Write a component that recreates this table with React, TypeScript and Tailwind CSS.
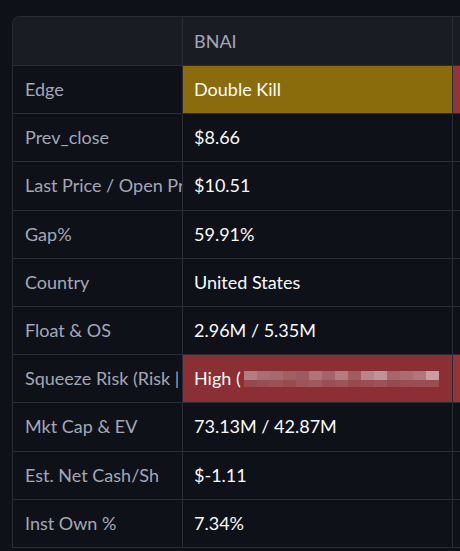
const rows: { label: string; value: string; tone?: 'gold' | 'red'; next?: 'red' }[] = [
  { label: 'Edge', value: 'Double Kill', tone: 'gold', next: 'red' },
  { label: 'Prev_close', value: '$8.66' },
  { label: 'Last Price / Open Price', value: '$10.51' },
  { label: 'Gap%', value: '59.91%' },
  { label: 'Country', value: 'United States' },
  { label: 'Float & OS', value: '2.96M / 5.35M' },
  { label: 'Squeeze Risk (Risk | Reason)', value: 'High (', tone: 'red', next: 'red' },
  { label: 'Mkt Cap & EV', value: '73.13M / 42.87M' },
  { label: 'Est. Net Cash/Sh', value: '$-1.11' },
  { label: 'Inst Own %', value: '7.34%' },
];

// pixelated blur over the redacted reason text
const mosaicTop = ['#b47d80', '#a96e72', '#a56a6d', '#a0605f', '#9e5b5f', '#b07477', '#a46467', '#b27c80', '#a25c60', '#b6868a', '#be9498', '#a6666a', '#aa6e72', '#b0777b', '#c89ea0'];
const mosaicBottom = ['#98484d', '#9a4d52', '#9c5156', '#9a4b50', '#9e555a', '#a05a5f', '#9b4f54', '#9d5358', '#984a4f', '#9a4d52', '#9c5257', '#974a4f', '#9a4c51', '#9b4e53', '#9a4d52'];

function Mosaic() {
  return (
    <div className="ml-[3px] flex flex-col">
      <div className="flex">
        {mosaicTop.map((c, i) => (
          <div key={i} className="h-[9px] w-[13px]" style={{ backgroundColor: c }} />
        ))}
      </div>
      <div className="flex">
        {mosaicBottom.map((c, i) => (
          <div key={i} className="h-[7px] w-[13px]" style={{ backgroundColor: c }} />
        ))}
      </div>
    </div>
  );
}

export default function App() {
  return (
    <div
      className="h-[551px] w-[460px] overflow-hidden bg-[#0e1117] pl-3 pt-4"
      style={{ fontFamily: 'Lato, "Liberation Sans", sans-serif' }}
    >
      <div className="w-[700px] overflow-hidden rounded-tl-lg border-l border-t border-[#2b2d35] text-[18px]">
        {/* header */}
        <div className="flex h-[49px] bg-[#1a1c23]">
          <div className="w-[170px] shrink-0 border-b border-r border-[#2b2d35]" />
          <div className="flex w-[270px] shrink-0 items-center border-b border-r border-[#2b2d35] px-[11px] text-[#a3a8b8]">
            BNAI
          </div>
          <div className="w-[200px] shrink-0 border-b border-[#2b2d35]" />
        </div>
        {rows.map((r) => (
          <div key={r.label} className="flex h-[48.2px]">
            <div className="flex w-[170px] shrink-0 items-center overflow-hidden whitespace-nowrap border-b border-r border-[#2b2d35] bg-[#0e1117] pl-3 text-[#a3a8b8]">
              {r.label}
            </div>
            <div
              className={
                'flex w-[270px] shrink-0 items-center overflow-hidden whitespace-nowrap border-b border-r border-[#2b2d35] px-[11px] text-[#fafafa] ' +
                (r.tone === 'gold' ? 'bg-[#8a6c0c]' : r.tone === 'red' ? 'bg-[#8b2f34]' : 'bg-[#0e1117]')
              }
            >
              {r.value}
              {r.tone === 'red' && <Mosaic />}
            </div>
            <div className={'w-[200px] shrink-0 border-b border-[#2b2d35] ' + (r.next === 'red' ? 'bg-[#92343b]' : 'bg-[#0e1117]')} />
          </div>
        ))}
      </div>
    </div>
  );
}
